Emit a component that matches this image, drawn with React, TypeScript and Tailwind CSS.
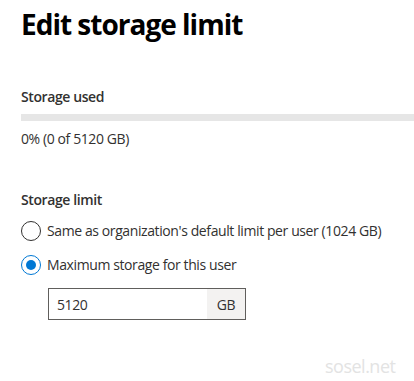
import { useState } from 'react';

/** Edit storage limit panel for a single user. */
export default function App() {
  const [mode, setMode] = useState<'default' | 'custom'>('custom');
  const [limit, setLimit] = useState('5120');

  const radio = (value: 'default' | 'custom', label: string, cls: string) => (
    <label className={`flex cursor-pointer items-center gap-[6px] ${cls}`} onClick={() => setMode(value)}>
      <span
        className={`flex h-[20px] w-[20px] shrink-0 items-center justify-center rounded-full border ${
          mode === value ? 'border-[#0078d4]' : 'border-[#323130]'
        }`}
      >
        {mode === value && <span className="h-[10px] w-[10px] rounded-full bg-[#0078d4]" />}
      </span>
      <span className="text-[14px] leading-[20px] tracking-[-0.4px] text-[#323130]">{label}</span>
    </label>
  );

  return (
    <div className="relative h-[381px] w-[414px] overflow-hidden bg-white pl-[21px] font-['Open_Sans',sans-serif]">
      <h1 className="mt-[6px] text-[28px] font-bold leading-[36px] tracking-[-1px] text-black">Edit storage limit</h1>

      <div className="mt-[45px] text-[14px] font-semibold leading-[20px] tracking-[-0.4px] text-[#323130]">Storage used</div>
      <div className="mt-[7px] h-[7px] w-full bg-[#e6e6e6]" />
      <div className="mt-[8px] text-[14px] leading-[20px] tracking-[-0.4px] text-[#323130]">0% (0 of 5120 GB)</div>

      <div className="mt-[41px] text-[14px] font-semibold leading-[20px] tracking-[-0.4px] text-[#323130]">Storage limit</div>
      {radio('default', "Same as organization's default limit per user (1024 GB)", 'mt-[11px]')}
      {radio('custom', 'Maximum storage for this user', 'mt-[14px]')}

      <div className="ml-[27px] mt-[13px] flex h-[32px] w-[198px] border border-[#605e5c]">
        <input
          className="min-w-0 flex-1 pl-[8px] text-[14px] tracking-[-0.4px] text-[#323130] outline-none"
          value={limit}
          disabled={mode !== 'custom'}
          onChange={(e) => setLimit(e.target.value)}
        />
        <span className="flex w-[38px] items-center justify-center bg-[#f3f2f1] text-[14px] tracking-[-0.4px] text-[#323130]">GB</span>
      </div>

      <div className="absolute left-[325px] top-[353px] text-[18px] tracking-[-0.5px] text-[#e3e3e3]">sosel.net</div>
    </div>
  );
}
